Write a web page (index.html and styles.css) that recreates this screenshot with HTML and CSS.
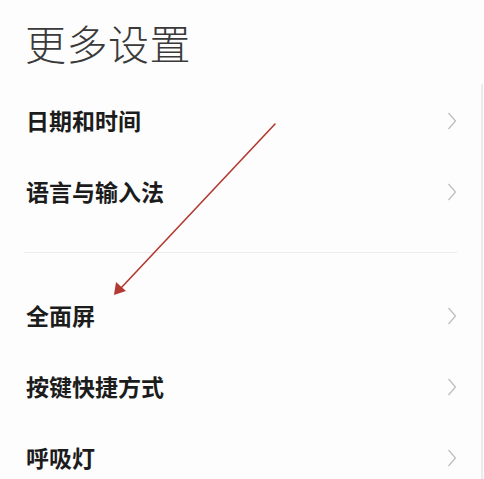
FILE: index.html
```html
<!DOCTYPE html>
<html lang="zh-CN">
<head>
<meta charset="utf-8">
<title>更多设置</title>
<link rel="stylesheet" href="styles.css">
</head>
<body>
<div class="screen">
  <main class="content">
    <h1 class="title">更多设置</h1>
    <ul class="group">
      <li class="row"><span class="label">日期和时间</span><svg class="chev" viewBox="0 0 10 18"><polyline points="1.5,1 8.5,9 1.5,17"/></svg></li>
      <li class="row"><span class="label">语言与输入法</span><svg class="chev" viewBox="0 0 10 18"><polyline points="1.5,1 8.5,9 1.5,17"/></svg></li>
    </ul>
    <hr class="divider">
    <ul class="group group-2">
      <li class="row"><span class="label">全面屏</span><svg class="chev" viewBox="0 0 10 18"><polyline points="1.5,1 8.5,9 1.5,17"/></svg></li>
      <li class="row"><span class="label">按键快捷方式</span><svg class="chev" viewBox="0 0 10 18"><polyline points="1.5,1 8.5,9 1.5,17"/></svg></li>
      <li class="row"><span class="label">呼吸灯</span><svg class="chev" viewBox="0 0 10 18"><polyline points="1.5,1 8.5,9 1.5,17"/></svg></li>
    </ul>
  </main>
  <div class="edge"></div>
  <svg class="annotation" viewBox="0 0 484 479" width="484" height="479">
    <line x1="275" y1="124" x2="121" y2="288" />
    <polygon points="114,295 116,282 126,291" />
  </svg>
</div>
</body>
</html>
```

FILE: styles.css
```css
html, body {
  margin: 0;
  padding: 0;
  background: #fdfdfd;
}
body {
  font-family: "Noto Sans CJK SC", "Noto Sans", sans-serif;
  width: 484px;
  height: 479px;
  overflow: hidden;
}
.screen {
  position: relative;
  display: flex;
  width: 484px;
  height: 479px;
}
.content {
  flex: 1;
  padding: 22px 24px 0 24px;
  box-sizing: border-box;
}
.title {
  margin: 0 0 0 1px;
  font-size: 41px;
  line-height: 41px;
  font-weight: 300;
  color: #3a3a3a;
  letter-spacing: 0.5px;
}
.group {
  list-style: none;
  margin: 22px 0 0 0;
  padding: 0;
}
.group-2 {
  margin-top: 27px;
}
.row {
  display: flex;
  align-items: center;
  justify-content: space-between;
  height: 71px;
  padding: 0 0 0 2px;
}
.label {
  font-size: 23px;
  font-weight: 700;
  color: #1c1c1c;
  line-height: 1;
}
.chev {
  width: 10px;
  height: 18px;
  fill: none;
  stroke: #bcbcbc;
  stroke-width: 1.2;
}
.divider {
  margin: 25px 0 0 0;
  border: 0;
  height: 1px;
  background: #ececec;
}
.edge {
  width: 2px;
  margin: 84px 1px 0 0;
  background: #ebebeb;
}
.annotation {
  position: absolute;
  left: 0;
  top: 0;
  pointer-events: none;
}
.annotation line {
  stroke: #b23a30;
  stroke-width: 1.6;
  stroke-linecap: round;
}
.annotation polygon {
  fill: #b23a30;
}
```
